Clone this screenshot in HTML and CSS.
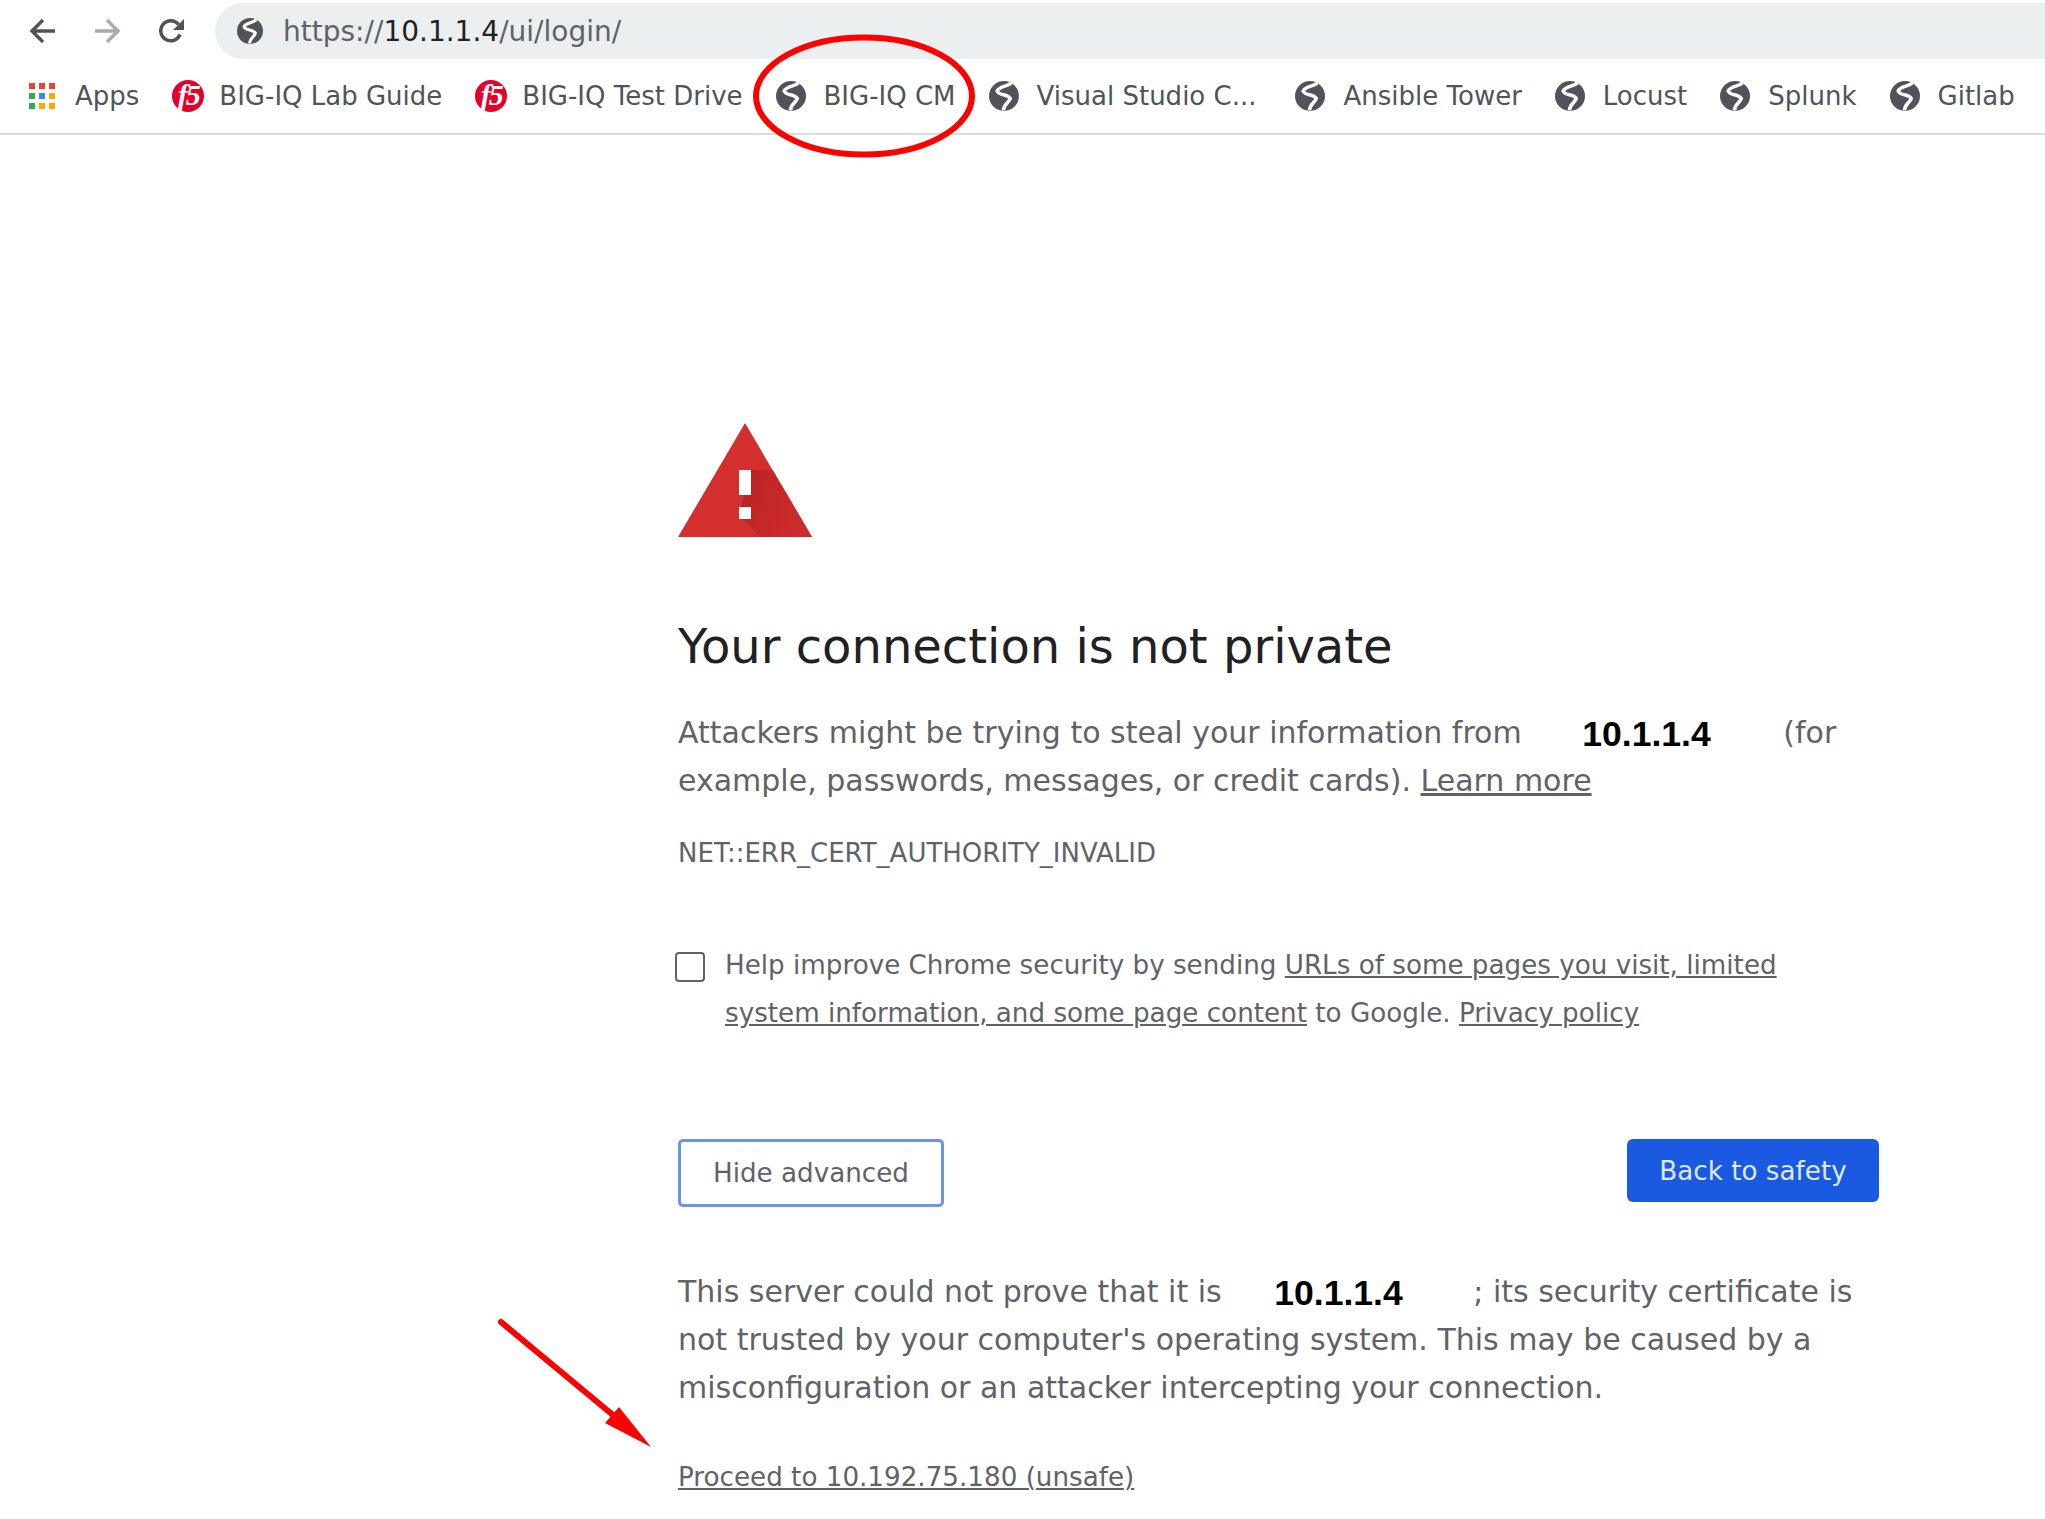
FILE: index.html
```html
<!DOCTYPE html>
<html lang="en">
<head>
    <meta charset="UTF-8">
    <title>Privacy error</title>
    <link rel="stylesheet" href="styles.css">
</head>
<body>
    <svg width="0" height="0" class="defs">
        <symbol id="globe" viewBox="0 0 24 24">
            <circle cx="12" cy="12" r="12" fill="#50545a"/>
            <path d="M18 1.5C14 5 8.5 4 6.5 8C8 12 14.5 10 17 14C16 17.500 12 18 11.500 23.500" fill="none" stroke="#fff" stroke-width="2.800"/>
        </symbol>
        <linearGradient id="warn-shade" x1="0" y1="0.2" x2="1" y2="0.5">
            <stop offset="0" stop-color="#b71c1c"/>
            <stop offset="0.35" stop-color="#c42727"/>
            <stop offset="1" stop-color="#cb2b2b"/>
        </linearGradient>
    </svg>

    <header class="toolbar">
        <div class="nav-btn">
            <svg viewBox="0 0 28 28"><path d="M26 14H4M14 3L3 14l11 11" class="nav-line"/></svg>
        </div>
        <div class="nav-btn nav-off">
            <svg viewBox="0 0 28 28"><path d="M2 14h22M14 3l11 11-11 11" class="nav-line"/></svg>
        </div>
        <div class="nav-btn">
            <svg viewBox="0 0 28 28"><path d="M23 17.5A10 10 0 1 1 21.5 7.5" class="nav-line"/><path d="M27 2v11H16z" fill="#50545a"/></svg>
        </div>
        <div class="omnibox">
            <svg class="omni-globe"><use href="#globe"/></svg>
            <span class="url">https://<b>10.1.1.4</b>/ui/login/</span>
        </div>
    </header>

    <nav class="bookmarks">
        <a class="mark">
            <span class="apps">
                <i class="r"></i><i class="r"></i><i class="r"></i>
                <i class="g"></i><i class="b"></i><i class="y"></i>
                <i class="g"></i><i class="y"></i><i class="y"></i>
            </span>
            Apps
        </a>
        <a class="mark"><span class="f5">f5</span>BIG-IQ Lab Guide</a>
        <a class="mark"><span class="f5">f5</span>BIG-IQ Test Drive</a>
        <a class="mark"><svg class="globe"><use href="#globe"/></svg>BIG-IQ CM</a>
        <a class="mark mark-long"><svg class="globe"><use href="#globe"/></svg>Visual Studio C...</a>
        <a class="mark"><svg class="globe"><use href="#globe"/></svg>Ansible Tower</a>
        <a class="mark"><svg class="globe"><use href="#globe"/></svg>Locust</a>
        <a class="mark"><svg class="globe"><use href="#globe"/></svg>Splunk</a>
        <a class="mark"><svg class="globe"><use href="#globe"/></svg>Gitlab</a>
    </nav>

    <main class="interstitial">
        <svg class="warn" viewBox="0 0 134 114">
            <path d="M67 0L134 114H0z" fill="#d32f2f"/>
            <path d="M73 47H94.600L134 114H82L61 92z" fill="url(#warn-shade)"/>
            <path d="M61 47h12v25H61zM61 84h12v12H61z" fill="#fff"/>
        </svg>
        <h1>Your connection is not private</h1>
        <p class="lead">Attackers might be trying to steal your information from <span class="host host-a">10.1.1.4</span> (for<br>example, passwords, messages, or credit cards). <a>Learn more</a></p>
        <p class="code">NET::ERR_CERT_AUTHORITY_INVALID</p>
        <div class="optin">
            <span class="check"></span>
            <p>Help improve Chrome security by sending <a>URLs of some pages you visit, limited<br>system information, and some page content</a> to Google. <a>Privacy policy</a></p>
        </div>
        <div class="actions">
            <button class="btn-adv">Hide advanced</button>
            <button class="btn-safe">Back to safety</button>
        </div>
        <p class="lead details">This server could not prove that it is <span class="host host-b">10.1.1.4</span> ; its security certificate is<br>not trusted by your computer's operating system. This may be caused by a<br>misconfiguration or an attacker intercepting your connection.</p>
        <p class="proceed"><a>Proceed to 10.192.75.180 (unsafe)</a></p>
    </main>

    <!-- annotations on top of the screenshot -->
    <svg class="marks-over" width="2045" height="1519">
        <ellipse cx="864" cy="96" rx="108" ry="58.500" fill="none" stroke="#f00" stroke-width="6"/>
        <path d="M501 1322L625 1425" stroke="#f00" stroke-width="6" stroke-linecap="round"/>
        <path d="M651 1447L619 1407L605 1423z" fill="#f00"/>
    </svg>
</body>
</html>
```

FILE: styles.css
```css
body {
    margin: 0;
    background-color: #fff;
    font-family: "DejaVu Sans", sans-serif;
    color: #5f6368;
    min-height: 1519px;
    position: relative;
    overflow: hidden;
}
.defs {
    position: absolute;
}
.toolbar {
    display: flex;
    align-items: center;
    height: 56px;
    padding: 3px 0 0 29px;
}
.nav-btn {
    width: 28px;
    height: 28px;
    margin-right: 36px;
}
.nav-btn svg {
    display: block;
    width: 28px;
    height: 28px;
}
.nav-line {
    fill: none;
    stroke: #50545a;
    stroke-width: 3.4;
}
.nav-off .nav-line {
    stroke: #a9abad;
}
.omnibox {
    flex: 1;
    height: 56px;
    margin-left: -6px;
    display: flex;
    align-items: center;
    gap: 20px;
    padding-left: 22px;
    background-color: #ebeff0;
    border-radius: 28px 0 0 28px;
}
.omni-globe {
    width: 26px;
    height: 26px;
}
.url {
    font-size: 28px;
    color: #5f6368;
}
.url b {
    font-weight: normal;
    color: #202124;
}
.bookmarks {
    display: flex;
    align-items: center;
    gap: 33px;
    height: 74px;
    padding-left: 29px;
    border-bottom: 2px solid #dadce0;
    font-size: 26px;
    white-space: nowrap;
}
.mark {
    display: flex;
    align-items: center;
    gap: 18px;
    color: #50545a;
}
.mark-long {
    margin-right: 6px;
}
.globe {
    width: 30px;
    height: 30px;
}
.f5 {
    width: 32px;
    height: 32px;
    margin-right: -3px;
    border-radius: 50%;
    background-color: #e4002b;
    color: #fff;
    font: italic bold 30px/30px "Liberation Serif", serif;
    letter-spacing: -2px;
    text-align: center;
}
.apps {
    display: grid;
    grid-template-columns: repeat(3, 6px);
    gap: 4px;
    width: 26px;
    margin-right: 2px;
}
.apps i {
    height: 6px;
}
.apps .r { background-color: #ea4335; }
.apps .g { background-color: #34a853; }
.apps .b { background-color: #4285f4; }
.apps .y { background-color: #f9ab00; }
.interstitial {
    width: 1200px;
    padding: 288px 0 0 678px;
}
.warn {
    display: block;
    width: 134px;
    height: 114px;
}
h1 {
    margin: 81px 0 0;
    font-size: 48px;
    line-height: 56px;
    font-weight: normal;
    color: #202124;
}
p {
    margin: 0;
}
a {
    color: inherit;
}
p a {
    text-decoration: underline;
}
.lead {
    margin-top: 35px;
    font-size: 30px;
    line-height: 48px;
}
.host {
    font: bold 35.6px/0 "Liberation Sans", sans-serif;
    vertical-align: -3px;
    color: #000;
}
.host-a {
    margin: 0 63px 0 51px;
}
.host-b {
    margin: 0 61px 0 43px;
}
.code {
    margin-top: 28px;
    font-size: 26px;
    line-height: 40px;
}
.optin {
    display: flex;
    gap: 20px;
    margin-top: 68px;
    margin-left: -3px;
    font-size: 26.2px;
    line-height: 48px;
}
.check {
    flex: none;
    box-sizing: border-box;
    width: 30px;
    height: 30px;
    margin-top: 11px;
    border: 2px solid #5f6368;
    border-radius: 4px;
}
.actions {
    display: flex;
    justify-content: space-between;
    align-items: flex-start;
    margin-top: 102px;
}
button {
    font-family: inherit;
    font-size: 26.2px;
    cursor: pointer;
}
.btn-adv {
    width: 266px;
    height: 68px;
    background-color: #fff;
    color: #5f6368;
    border: 3px solid #6b96e6;
    border-radius: 5px;
}
.btn-safe {
    width: 252px;
    height: 63px;
    margin-right: -1px;
    background-color: #1a5ae0;
    color: #dfe9fb;
    border: none;
    border-radius: 6px;
}
.details {
    margin-top: 61px;
}
.proceed {
    margin-top: 45px;
    font-size: 26.2px;
    line-height: 40px;
}
.marks-over {
    position: absolute;
    top: 0;
    left: 0;
    pointer-events: none;
}
```
